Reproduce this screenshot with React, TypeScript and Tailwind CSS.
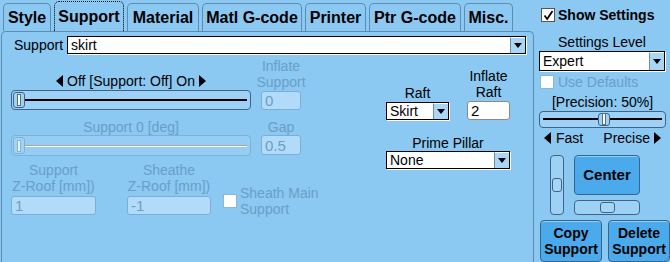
import React from "react";

const tabs = ["Style", "Support", "Material", "Matl G-code", "Printer", "Ptr G-code", "Misc."];
const tabW: Record<string, string> = {
  Style: "w-[48px]",
  Support: "w-[70px]",
  Material: "w-[72px]",
  "Matl G-code": "w-[100px]",
  Printer: "w-[61px]",
  "Ptr G-code": "w-[92px]",
  "Misc.": "w-[49px]",
};

function Tri({ dir }: { dir: "l" | "r" }) {
  return (
    <svg width="7" height="12" viewBox="0 0 7 12" className="inline-block">
      <path d={dir === "l" ? "M7 0V12L0 6Z" : "M0 0V12L7 6Z"} fill="#000" />
    </svg>
  );
}

function Select({ value, className = "" }: { value: string; className?: string }) {
  return (
    <div
      className={`flex items-stretch bg-white border border-black shadow-[1px_1px_0_#ffffff] ${className}`}
    >
      <span className="flex-1 pl-[3px] flex items-center text-[14px] leading-none">{value}</span>
      <span className="w-[15px] bg-[#a9d6f4] border-l border-[#6f8fa8] border-t border-t-white flex items-center justify-center">
        <svg width="8" height="5" viewBox="0 0 8 5">
          <path d="M0 0H8L4 5Z" fill="#000" />
        </svg>
      </span>
    </div>
  );
}

function NumBox({ value, disabled, className = "" }: { value: string; disabled?: boolean; className?: string }) {
  return (
    <div
      className={`flex items-center pl-[3px] rounded-[3px] border text-[15px] leading-none ${
        disabled
          ? "bg-[#b1dbf8] border-[#7eaed3] text-[#6a9fc6]"
          : "bg-white border-[#8a8a8a] text-black"
      } ${className}`}
    >
      {value}
    </div>
  );
}

function HSlider({ disabled, thumb, className = "" }: { disabled?: boolean; thumb: string; className?: string }) {
  return (
    <div
      className={`relative flex items-center px-[3px] rounded-[4px] border ${
        disabled ? "border-[#7fb0d6] bg-[#95cdf4]" : "border-[#3f6484] bg-[#9dd2f6]"
      } ${className}`}
    >
      <div className={`w-full h-[2px] ${disabled ? "bg-[#a3a8ac] border-b border-white" : "bg-black"}`} />
      <div
        className={`absolute top-[1px] bottom-[1px] w-[12px] rounded-[3px] border flex items-center justify-center ${
          disabled ? "border-[#7fb0d6] bg-[#9fd3f6]" : "border-[#3f6484] bg-[#9fd3f6]"
        } ${thumb}`}
      >
        <div className={`w-[4px] h-[12px] border ${disabled ? "border-[#8ab3cf] bg-[#e8f4fc]" : "border-[#50708a] bg-white"}`} />
      </div>
    </div>
  );
}

function Check({ checked, disabled }: { checked?: boolean; disabled?: boolean }) {
  return (
    <div
      className={`w-[14px] h-[14px] shrink-0 flex items-center justify-center border ${
        disabled ? "border-[#8fb6d2] bg-white" : "border-[#555] bg-white"
      }`}
    >
      {checked && (
        <svg width="11" height="11" viewBox="0 0 11 11">
          <path d="M1.5 5.5L4.2 9L9.5 1" stroke="#000" strokeWidth="1.8" fill="none" />
        </svg>
      )}
    </div>
  );
}

function Btn({ children, className = "" }: { children: React.ReactNode; className?: string }) {
  return (
    <div
      className={`flex items-center justify-center text-center rounded-[4px] border border-[#35648c] bg-[#4aaaec] shadow-[inset_0_1px_0_#8fd0f8] font-bold ${className}`}
    >
      {children}
    </div>
  );
}

export default function App() {
  return (
    <div className="relative w-[670px] h-[262px] bg-[#8bc8f2] flex font-['Liberation_Sans',Arial,sans-serif] text-[14px] leading-[16px] text-black overflow-hidden">
      {/* left: tabs + panel */}
      <div className="w-[536px] flex flex-col">
        <div className="h-[31px] flex items-end gap-[3px] pl-[3px]">
          {tabs.map((t) => {
            const sel = t === "Support";
            return (
              <div
                key={t}
                className={`${tabW[t]} flex items-center justify-center font-bold text-[16px] rounded-t-[5px] border border-b-0 bg-[#8bc8f2] ${
                  sel ? "h-[30px] border-dotted border-black" : "h-[28px] border-[#5e8cb0]"
                }`}
              >
                {t}
              </div>
            );
          })}
        </div>
        <div className="flex-1 ml-[1px] border border-b-0 border-[#5e8cb0] rounded-t-[5px] flex flex-col">
          <div className="h-[18px] flex items-center pl-[12px] pr-[7px] mt-[4px]">
            <span className="leading-none">Support</span>
            <Select value="skirt" className="flex-1 ml-[4px] h-[18px]" />
          </div>

          <div className="flex items-start">
            {/* left block */}
            <div className="w-[290px] shrink-0 ml-[9px] mt-[4px] flex flex-col">
              <div className="flex items-end">
                <div className="w-[240px] flex flex-col">
                  <div className="h-[16px] flex items-center justify-center gap-[4px]">
                    <Tri dir="l" />
                    <span>Off [Support: Off] On</span>
                    <Tri dir="r" />
                  </div>
                  <HSlider thumb="left-[1px]" className="h-[20px] mt-[1px]" />
                </div>
                <div className="w-[40px] ml-[10px] flex flex-col items-center">
                  <div className="text-center text-[#6a9fc6] whitespace-nowrap">
                    Inflate
                    <br />
                    Support
                  </div>
                  <NumBox value="0" disabled className="w-[40px] h-[19px] mt-[1px]" />
                </div>
              </div>

              <div className="flex items-end mt-[9px]">
                <div className="w-[240px] flex flex-col">
                  <div className="h-[16px] text-center text-[#6a9fc6]">Support 0 [deg]</div>
                  <HSlider disabled thumb="left-[1px]" className="h-[21px]" />
                </div>
                <div className="w-[40px] ml-[10px] flex flex-col items-center">
                  <div className="text-[#6a9fc6]">Gap</div>
                  <NumBox value="0.5" disabled className="w-[40px] h-[20px] mb-[1px]" />
                </div>
              </div>

              <div className="flex items-start mt-[6px]">
                <div className="w-[85px] shrink-0 flex flex-col items-center">
                  <div className="text-center text-[#6a9fc6] whitespace-nowrap">
                    Support
                    <br />
                    Z-Roof [mm])
                  </div>
                  <NumBox value="1" disabled className="w-[85px] h-[19px] mt-[2px]" />
                </div>
                <div className="w-[84px] shrink-0 ml-[31px] flex flex-col items-center">
                  <div className="text-center text-[#6a9fc6] whitespace-nowrap">
                    Sheathe
                    <br />
                    Z-Roof [mm])
                  </div>
                  <NumBox value="-1" disabled className="w-[84px] h-[19px] mt-[2px]" />
                </div>
                <div className="ml-[12px] mt-[23px] flex items-center shrink-0">
                  <Check disabled />
                  <div className="ml-[3px] text-[#6a9fc6] whitespace-nowrap">
                    Sheath Main
                    <br />
                    Support
                  </div>
                </div>
              </div>
            </div>

            {/* right block */}
            <div className="ml-[85px] mt-[14px] flex flex-col">
              <div className="flex items-end">
                <div className="w-[63px] flex flex-col items-center">
                  <div>Raft</div>
                  <Select value="Skirt" className="w-[63px] h-[18px] mt-[1px]" />
                </div>
                <div className="w-[43px] ml-[18px] flex flex-col items-center">
                  <div className="text-center whitespace-nowrap">
                    Inflate
                    <br />
                    Raft
                  </div>
                  <NumBox value="2" className="w-[43px] h-[19px] mt-[1px]" />
                </div>
              </div>
              <div className="mt-[15px] flex flex-col items-center w-[124px]">
                <div>Prime Pillar</div>
                <Select value="None" className="w-[124px] h-[18px]" />
              </div>
            </div>
          </div>
        </div>
      </div>

      {/* right column */}
      <div className="flex-1 pl-[5px] flex flex-col">
        <div className="mt-[8px] ml-[2px] flex items-center h-[14px]">
          <Check checked />
          <span className="ml-[3px] font-bold text-[14px] leading-none">Show Settings</span>
        </div>
        <div className="mt-[12px] h-[16px] text-center w-[126px]">Settings Level</div>
        <Select value="Expert" className="w-[126px] h-[21px] mt-[1px]" />
        <div className="mt-[4px] ml-[1px] flex items-center h-[14px]">
          <Check disabled />
          <span className="ml-[4px] text-[#6a9fc6] leading-none">Use Defaults</span>
        </div>
        <div className="mt-[5px] h-[16px] text-center w-[127px]">[Precision: 50%]</div>
        <HSlider thumb="left-[58px]" className="w-[127px] h-[18px] mt-[1px]" />
        <div className="mt-[2px] h-[16px] w-[127px] flex items-center justify-between px-[5px]">
          <span className="flex items-center gap-[5px]">
            <Tri dir="l" />
            Fast
          </span>
          <span className="flex items-center gap-[4px]">
            Precise
            <Tri dir="r" />
          </span>
        </div>
        <div className="mt-[9px] ml-[11px] flex">
          <div className="relative w-[14px] h-[60px] rounded-[4px] border border-[#3f6484] bg-[#9dd2f6] flex justify-center">
            <div className="absolute top-[22px] w-[10px] h-[14px] rounded-[3px] border border-[#3f6484] bg-[#a6d6f6]" />
          </div>
          <div className="ml-[10px] flex flex-col">
            <Btn className="w-[66px] h-[40px] text-[15px]">Center</Btn>
            <div className="mt-[5px] w-[66px] h-[15px] rounded-[4px] border border-[#3f6484] bg-[#9dd2f6] flex justify-center items-center">
              <div className="w-[15px] h-[11px] rounded-[3px] border border-[#3f6484] bg-[#a6d6f6]" />
            </div>
          </div>
        </div>
        <div className="mt-[5px] ml-[1px] flex gap-[6px]">
          <Btn className="w-[62px] h-[42px] text-[14px]">
            Copy
            <br />
            Support
          </Btn>
          <Btn className="w-[62px] h-[42px] text-[14px]">
            Delete
            <br />
            Support
          </Btn>
        </div>
      </div>

      {/* resize grip */}
      <svg width="8" height="8" viewBox="0 0 8 8" className="absolute right-0 bottom-0">
        <path d="M8 1L1 8M8 5L5 8" stroke="#5e8cb0" strokeWidth="1" />
      </svg>
    </div>
  );
}
